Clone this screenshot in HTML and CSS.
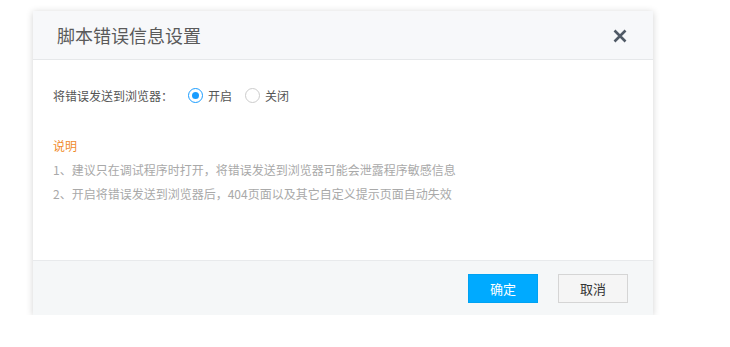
FILE: index.html
```html
<!DOCTYPE html>
<html lang="zh-CN">
<head>
    <meta charset="UTF-8">
    <title>脚本错误信息设置</title>
    <link rel="stylesheet" href="styles.css">
</head>
<body>

<div class="dialog">
    <div class="dialog-header">
        <h2>脚本错误信息设置</h2>
        <span class="close">
            <svg width="14" height="14" viewBox="0 0 14 14"><path d="M1.5 1.5L12.5 12.5M12.5 1.5L1.5 12.5" stroke="#505a66" stroke-width="2.6" stroke-linecap="butt"/></svg>
        </span>
    </div>

    <div class="dialog-body">
        <div class="form-row">
            <span class="label">将错误发送到浏览器：</span>
            <label class="radio checked"><i></i>开启</label>
            <label class="radio"><i></i>关闭</label>
        </div>

        <div class="notes">
            <p class="notes-title">说明</p>
            <p>1、建议只在调试程序时打开，将错误发送到浏览器可能会泄露程序敏感信息</p>
            <p>2、开启将错误发送到浏览器后，404页面以及其它自定义提示页面自动失效</p>
        </div>
    </div>

    <div class="dialog-footer">
        <button class="btn btn-primary">确定</button>
        <button class="btn">取消</button>
    </div>
</div>

</body>
</html>
```

FILE: styles.css
```css
body { margin: 0; padding: 11px 0 0 33px; background: #fff; font-family: "Noto Sans CJK SC", "Liberation Sans", sans-serif; color: #555; }
.dialog { width: 620px; background: #fff; box-shadow: 0 1px 7px rgba(0,0,0,0.18); }
.dialog-header { height: 48px; background: #f7f8fa; border-bottom: 1px solid #e6e8ea; display: flex; align-items: center; justify-content: space-between; padding: 0 26px 0 24px; }
.dialog-header h2 { margin: 0; font-size: 18px; font-weight: normal; color: #5a5a5a; }
.close { display: flex; width: 14px; height: 14px; margin-top: 1px; }
.dialog-body { height: 200px; box-sizing: border-box; padding: 25px 20px 0 20px; }
.form-row { display: flex; align-items: center; height: 20px; font-size: 12px; color: #555; }
.label { margin-right: 15px; }
.radio { display: flex; align-items: center; margin-right: 13px; }
.radio i { width: 13px; height: 13px; border: 1px solid #ccc; border-radius: 50%; margin-right: 5px; box-sizing: content-box; position: relative; }
.radio.checked i { border-color: #1a9dff; }
.radio.checked i::after { content: ''; position: absolute; left: 3px; top: 3px; width: 7px; height: 7px; border-radius: 50%; background: #1a9dff; }
.notes { margin-top: 29px; font-size: 12px; line-height: 24px; color: #a9a9a9; }
.notes p { margin: 0; }
.notes .notes-title { color: #f08a2a; }
.dialog-footer { height: 55px; box-sizing: border-box; background: #f5f7f8; border-top: 1px solid #e8eaec; display: flex; justify-content: flex-end; gap: 20px; padding: 13px 25px 0 0; }
.btn { width: 70px; height: 29px; font-family: inherit; font-size: 13px; border: 1px solid #d5d5d5; background: #f5f5f5; color: #333; cursor: pointer; padding: 0; }
.btn-primary { background: #00aaff; border-color: #00a2f2; color: #fff; }
```
